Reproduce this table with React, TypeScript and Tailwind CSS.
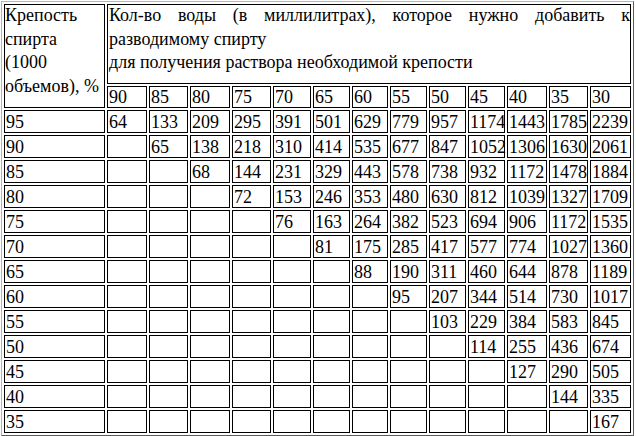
import React from "react";

const cols = ["90", "85", "80", "75", "70", "65", "60", "55", "50", "45", "40", "35", "30"];

const rows: { label: string; values: string[] }[] = [
  { label: "95", values: ["64", "133", "209", "295", "391", "501", "629", "779", "957", "1174", "1443", "1785", "2239"] },
  { label: "90", values: ["65", "138", "218", "310", "414", "535", "677", "847", "1052", "1306", "1630", "2061"] },
  { label: "85", values: ["68", "144", "231", "329", "443", "578", "738", "932", "1172", "1478", "1884"] },
  { label: "80", values: ["72", "153", "246", "353", "480", "630", "812", "1039", "1327", "1709"] },
  { label: "75", values: ["76", "163", "264", "382", "523", "694", "906", "1172", "1535"] },
  { label: "70", values: ["81", "175", "285", "417", "577", "774", "1027", "1360"] },
  { label: "65", values: ["88", "190", "311", "460", "644", "878", "1189"] },
  { label: "60", values: ["95", "207", "344", "514", "730", "1017"] },
  { label: "55", values: ["103", "229", "384", "583", "845"] },
  { label: "50", values: ["114", "255", "436", "674"] },
  { label: "45", values: ["127", "290", "505"] },
  { label: "40", values: ["144", "335"] },
  { label: "35", values: ["167"] },
];

function Cell({ children }: { children?: React.ReactNode }) {
  return (
    <div className="border border-black pl-px pt-px leading-[20px] whitespace-nowrap overflow-visible">
      {children}
    </div>
  );
}

export default function App() {
  return (
    <div className="bg-white w-[636px] h-[436px] pt-px pl-px text-black [font-family:'Liberation_Serif','Times_New_Roman',serif] text-[18px]">
      <div className="w-fit grid grid-cols-[101px_40px_39px_40px_39px_38px_37px_36px_37px_37px_37px_40px_39px_41px] grid-rows-[80px_22px_repeat(13,23px)] gap-[2px] p-[2px] border border-t-[#b4b4b4] border-l-[#b4b4b4] border-r-[#5a5a5a] border-b-[#5a5a5a]">
        <div className="row-span-2 border border-black leading-[23.5px]">
          <div className="-mt-px whitespace-nowrap">
            Крепость
            <br />
            спирта
            <br />
            (1000
            <br />
            объемов), %
          </div>
        </div>
        <div className="[grid-column:2/15] border border-black pl-px leading-[23.5px]">
          <div className="-mt-px">
            <div className="text-justify [text-align-last:justify]">
              Кол-во воды (в миллилитрах), которое нужно добавить к
            </div>
            <div className="whitespace-nowrap">разводимому спирту</div>
            <div className="whitespace-nowrap">для получения раствора необходимой крепости</div>
          </div>
        </div>
        {cols.map((c) => (
          <div key={c} className="border border-black pl-px leading-[20px]">
            {c}
          </div>
        ))}
        {rows.map((r, i) => (
          <React.Fragment key={r.label}>
            <Cell>{r.label}</Cell>
            {cols.map((c, j) => (
              <Cell key={c}>{j >= i ? r.values[j - i] : ""}</Cell>
            ))}
          </React.Fragment>
        ))}
      </div>
    </div>
  );
}
